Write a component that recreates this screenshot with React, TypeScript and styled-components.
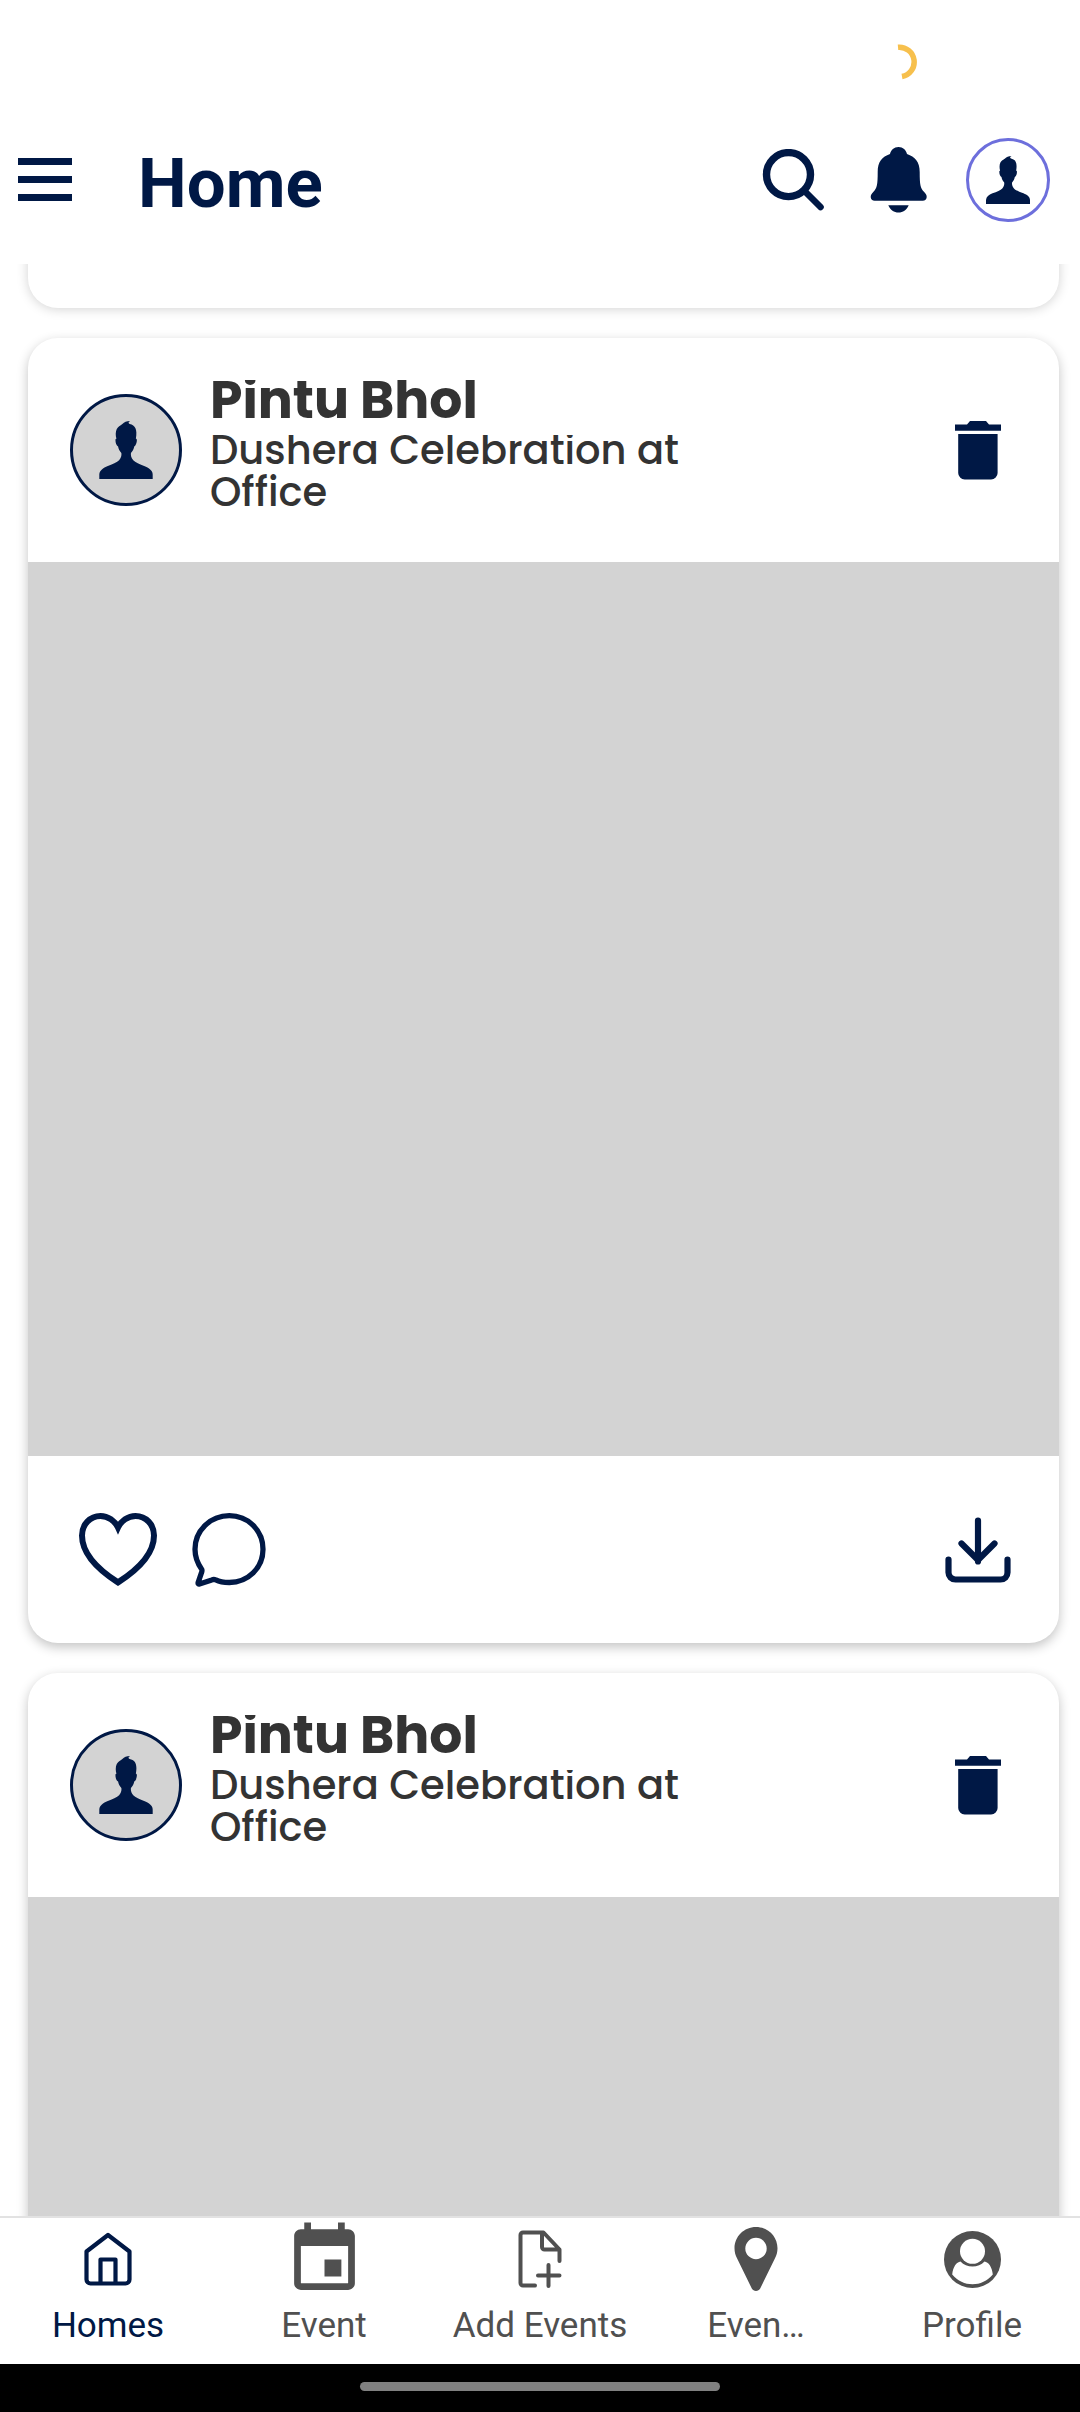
import React from "react";
import styled, { createGlobalStyle } from "styled-components";

const NAVY = "#001845";
const GREY = "#505050";

const GlobalStyle = createGlobalStyle`
  *, *::before, *::after { box-sizing: border-box; }
  body { margin: 0; background: #fff; font-family: Roboto, sans-serif; }
  h1, h2, p { margin: 0; }
  svg { display: block; }
`;

const Screen = styled.div`
  display: flex;
  flex-direction: column;
  height: 100vh;
  background: #fff;
  overflow: hidden;
`;

const StatusBar = styled.div`
  display: flex;
  justify-content: flex-end;
  height: 96px;
  padding: 44px 163px 0 0;
`;

const TopBar = styled.header`
  display: flex;
  align-items: center;
  height: 168px;
  padding: 0 30px 0 18px;
`;

const Title = styled.h1`
  margin-left: 66px;
  padding-top: 8px;
  color: ${NAVY};
  font-size: 69px;
  line-height: 80px;
  font-weight: 700;
`;

const TopActions = styled.div`
  display: flex;
  align-items: center;
  gap: 38px;
  margin-left: auto;
`;

const IconButton = styled.button`
  display: flex;
  align-items: center;
  justify-content: center;
  padding: 0;
  border: 0;
  background: none;
  color: ${NAVY};
  cursor: pointer;
`;

const ProfileButton = styled(IconButton)`
  width: 84px;
  height: 84px;
  border: 3px solid #6d6fdc;
  border-radius: 50%;
`;

const Feed = styled.main`
  display: flex;
  flex: 1;
  flex-direction: column;
  gap: 30px;
  min-height: 0;
  padding: 0 21px 0 28px;
  overflow: hidden;
`;

const Card = styled.article<{ $lift: number }>`
  flex-shrink: 0;
  border-radius: 30px;
  background: #fff;
  box-shadow: 0 ${(p) => p.$lift}px 12px rgba(0, 0, 0, ${(p) => 0.16 + p.$lift * 0.02});
`;

const PreviousCard = styled(Card)`
  height: 74px;
  margin-top: -30px;
  border-radius: 0 0 30px 30px;
`;

const CardHeader = styled.header`
  display: flex;
  align-items: center;
  height: 224px;
  padding: 0 56px 0 42px;
`;

const Avatar = styled.div`
  display: flex;
  align-items: center;
  justify-content: center;
  flex-shrink: 0;
  width: 112px;
  height: 112px;
  border: 3px solid ${NAVY};
  border-radius: 50%;
  background: #d3d3d3;
  color: ${NAVY};
`;

const Byline = styled.div`
  display: flex;
  flex: 0 1 520px;
  flex-direction: column;
  gap: 4px;
  margin: 0 auto 0 28px;
  padding-bottom: 12px;
  color: #333;
  font-family: Poppins, Inter, sans-serif;
`;

const Author = styled.h2`
  font-size: 52px;
  line-height: 50px;
  font-weight: 700;
  clip-path: inset(5px 0 0);
`;

const Caption = styled.p`
  font-size: 40px;
  line-height: 42px;
  font-weight: 500;
  clip-path: inset(6px 0 0);
`;

const Media = styled.div`
  width: 100%;
  height: 894px;
  background: #d3d3d3;
`;

const CardFooter = styled.footer`
  display: flex;
  align-items: center;
  gap: 34px;
  height: 187px;
  padding: 0 48px 0 51px;

  & > :last-child { margin-left: auto; }
`;

const TabBar = styled.nav`
  display: grid;
  grid-template-columns: repeat(5, 1fr);
  height: 148px;
  border-top: 2px solid #e2e2e2;
  background: #fff;
`;

const Tab = styled.a<{ $active?: boolean }>`
  display: flex;
  flex-direction: column;
  align-items: center;
  color: ${(p) => (p.$active ? NAVY : GREY)};
  font-size: 35px;
  line-height: 44px;
  text-decoration: none;
  white-space: nowrap;
`;

const TabIcon = styled.span`
  display: flex;
  align-items: center;
  justify-content: center;
  height: 82px;
  margin-bottom: 4px;
`;

const SystemBar = styled.div`
  display: flex;
  align-items: center;
  justify-content: center;
  height: 48px;
  padding-bottom: 4px;
  background: #000;
`;

const GestureHandle = styled.div`
  width: 33.333%;
  height: 9px;
  border-radius: 5px;
  background: #808080;
`;

const Person = ({ size }: { size: number }) => (
  <svg width={size} height={Math.round(size * 1.08)} viewBox="0 0 162 176" fill="currentColor" aria-hidden="true">
    <path d="M0 176v-14c1-12 10-19 24-25 16-6 30-11 36-18 6-7 8-14 7-22-5-6-9-12-10-20-5-2-8-10-8-19 0-3 1-4 3-4-3-10-3-22 1-30 4-7 10-10 17-15 6-5 12-9 24-9-6 3-7 6-2 9 17 4 24 15 19 45 2 0 3 2 3 4 0 8-3 17-8 19-1 8-5 14-10 20-1 8 1 15 7 22 6 7 19 12 35 18 14 6 24 13 24 25v14z" />
  </svg>
);

const Spinner = () => (
  <svg width="36" height="36" viewBox="0 0 36 36" fill="none" stroke="#f7c04d" strokeWidth="5.5" role="img" aria-label="Loading">
    <path d="M17 3.2a14.8 14.8 0 0 1 4 29.3" />
  </svg>
);

const MenuIcon = () => (
  <svg width="54" height="44" viewBox="0 0 54 44" fill="currentColor" aria-hidden="true">
    <path d="M0 0h54v7H0zM0 18h54v7H0zM0 36h54v7H0z" />
  </svg>
);

const SearchIcon = () => (
  <svg width="68" height="62" viewBox="0 0 68 62" fill="none" stroke="currentColor" aria-hidden="true">
    <circle cx="26.5" cy="25.6" r="22" strokeWidth="7.4" />
    <path d="M42.5 42 58.5 58" strokeWidth="6.6" strokeLinecap="round" />
  </svg>
);

const BellIcon = () => (
  <svg width="60" height="66" viewBox="0 0 60 66" fill="currentColor" aria-hidden="true">
    <path d="M30.5 0c4.5 0 7.500 3 8.500 7C47 9.700 51.700 15 51.700 25c0 13 .8 16 4 19.500 2 2 3 3.500 3 5.500 0 2.300-1.700 3.800-4 3.800H6.700c-2.300 0-4-1.500-4-3.800 0-2 1-3.500 3-5.500 3.200-3.500 4-6.500 4-19.500C9.700 15 14 9.700 22 7c1-4 4-7 8.500-7zM20.300 58.200h20.400C38.500 63 35 65.500 30.500 65.500s-8-2.500-10.200-7.300z" />
  </svg>
);

const TrashIcon = () => (
  <svg width="50" height="60" viewBox="0 0 50 60" fill="currentColor" aria-hidden="true">
    <path d="M2 4.500h12L17 1h16l3 3.500h12v6.300H2zM5.200 14h39.400v39a6.500 6.500 0 0 1-6.500 6.500H11.700A6.500 6.500 0 0 1 5.200 53z" />
  </svg>
);

const HeartIcon = () => (
  <svg width="78" height="73" viewBox="0 0 78 73" fill="none" stroke="currentColor" strokeWidth="6" aria-hidden="true">
    <path d="M39 14.500C36 8 29 3 21.500 3 11 3 3 11.500 3 22.500 3 43 22 58.500 39 69.400 56 58.500 75 43 75 22.500 75 11.500 67 3 56.500 3 49 3 42 8 39 14.500z" />
  </svg>
);

const CommentIcon = () => (
  <svg width="76" height="74" viewBox="0 0 76 74" fill="none" stroke="currentColor" strokeWidth="5.300" strokeLinejoin="round" aria-hidden="true">
    <path d="M10.800 56.500C6.500 50.500 4 43.500 4 36.300 4 17.500 19.500 2.700 38.300 2.700S72 17.500 72 36.300 57 69.500 38.300 69.500c-5 0-9.500-.5-13.500-2.600-1.500-.6-2.500-.6-4 0L8.500 71c-1 .3-1.600-.2-1.400-1.300l3.400-10c.5-1.300.7-2.200.3-3.200z" />
  </svg>
);

const DownloadIcon = () => (
  <svg width="66" height="66" viewBox="0 0 66 66" fill="none" stroke="currentColor" strokeWidth="6.200" strokeLinecap="round" strokeLinejoin="round" aria-hidden="true">
    <path d="M33 3.500v41M16.500 26.500 33 43l16.500-16.500M3.500 42.500v13a7 7 0 0 0 7 7h45a7 7 0 0 0 7-7v-13" />
  </svg>
);

const HomeIcon = () => (
  <svg width="48" height="54" viewBox="0 0 48 54" fill="none" stroke="currentColor" strokeWidth="4.200" strokeLinejoin="round" strokeLinecap="round" aria-hidden="true">
    <path d="M24 3 2.500 19.500v28a4 4 0 0 0 4 4h35a4 4 0 0 0 4-4v-28zM16.500 51.500v-24h15v24" />
  </svg>
);

const EventIcon = () => (
  <svg width="81" height="81" viewBox="0 0 24 24" fill="currentColor" aria-hidden="true">
    <path d="M17 12h-5v5h5v-5zM16 1v2H8V1H6v2H5c-1.110 0-1.990.9-1.990 2L3 19c0 1.100.89 2 2 2h14c1.100 0 2-.9 2-2V5c0-1.100-.9-2-2-2h-1V1h-2zm3 18H5V8h14v11z" />
  </svg>
);

const AddDocIcon = () => (
  <svg width="44" height="58" viewBox="0 0 44 58" fill="none" stroke="currentColor" strokeWidth="4" strokeLinejoin="round" strokeLinecap="round" aria-hidden="true">
    <path d="M17 55.500H5a2.500 2.500 0 0 1-2.500-2.500V5A2.500 2.500 0 0 1 5 2.500h20.500l16 17V31M24 3v14a2.500 2.500 0 0 0 2.500 2.500h15M30.500 35v21M20 45.500h21.500" />
  </svg>
);

const PinIcon = () => (
  <svg width="44" height="64" viewBox="0 0 44 64" fill="currentColor" aria-hidden="true">
    <path fillRule="evenodd" d="M22 0c12 0 21.500 9.500 21.500 21.300 0 4-1 7-2.500 10L26.200 61.500c-1.700 3.300-6.700 3.300-8.400 0L3 31.300c-1.500-3-2.500-6-2.500-10C.5 9.500 10 0 22 0zm0 10.800a10.700 10.700 0 1 0 0 21.400 10.700 10.700 0 0 0 0-21.400z" />
  </svg>
);

const UserIcon = () => (
  <svg width="57" height="57" viewBox="0 0 57 57" aria-hidden="true">
    <circle cx="28.500" cy="28.500" r="28.500" fill="currentColor" />
    <circle cx="28.500" cy="20.300" r="12.500" fill="#fff" />
    <path d="M16.500 30.600c6 6.600 18 6.600 24 0 4 .5 7.500 5.500 8.300 12.900C38 56.500 19 56.500 8.200 43.500c.8-7.400 4.300-12.400 8.300-12.900z" fill="#fff" />
  </svg>
);

const Post = ({ author, caption, lift }: { author: string; caption: string; lift: number }) => (
  <Card $lift={lift}>
    <CardHeader>
      <Avatar><Person size={54} /></Avatar>
      <Byline>
        <Author>{author}</Author>
        <Caption>{caption}</Caption>
      </Byline>
      <IconButton aria-label="Delete post"><TrashIcon /></IconButton>
    </CardHeader>
    <Media />
    <CardFooter>
      <IconButton aria-label="Like"><HeartIcon /></IconButton>
      <IconButton aria-label="Comment"><CommentIcon /></IconButton>
      <IconButton aria-label="Download"><DownloadIcon /></IconButton>
    </CardFooter>
  </Card>
);

const tabs = [
  { label: "Homes", href: "#home", Icon: HomeIcon },
  { label: "Event", href: "#event", Icon: EventIcon },
  { label: "Add Events", href: "#add", Icon: AddDocIcon },
  { label: "Even…", href: "#places", Icon: PinIcon },
  { label: "Profile", href: "#profile", Icon: UserIcon },
];

export default function App() {
  return (
    <>
      <GlobalStyle />
      <Screen>
        <StatusBar><Spinner /></StatusBar>
        <TopBar>
          <IconButton aria-label="Menu"><MenuIcon /></IconButton>
          <Title>Home</Title>
          <TopActions>
            <IconButton aria-label="Search"><SearchIcon /></IconButton>
            <IconButton aria-label="Notifications"><BellIcon /></IconButton>
            <ProfileButton aria-label="My profile"><Person size={44} /></ProfileButton>
          </TopActions>
        </TopBar>
        <Feed>
          <PreviousCard $lift={1} />
          <Post author="Pintu Bhol" caption="Dushera Celebration at Office" lift={4} />
          <Post author="Pintu Bhol" caption="Dushera Celebration at Office" lift={4} />
        </Feed>
        <TabBar>
          {tabs.map(({ label, href, Icon }, i) => (
            <Tab key={label} href={href} $active={i === 0}>
              <TabIcon><Icon /></TabIcon>
              {label}
            </Tab>
          ))}
        </TabBar>
        <SystemBar><GestureHandle /></SystemBar>
      </Screen>
    </>
  );
}
